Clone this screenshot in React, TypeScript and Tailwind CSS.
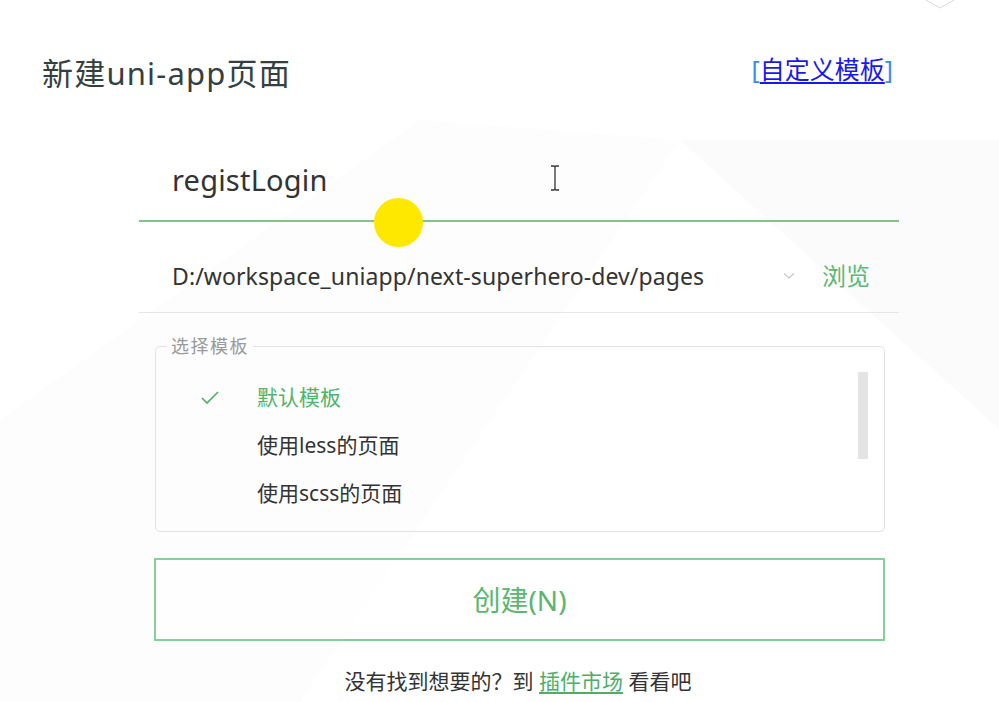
import React from "react";

const FONT = '"Noto Sans", "Noto Sans CJK SC", sans-serif';

export default function App() {
  return (
    <div
      className="relative w-[999px] h-[702px] overflow-hidden bg-white"
      style={{ fontFamily: FONT }}
    >
      {/* faint watermark */}
      <svg
        className="absolute inset-0 pointer-events-none"
        width="999"
        height="702"
        viewBox="0 0 999 702"
      >
        <polygon points="680,140 1000,430 1000,140" fill="#fbfbfc" />
        <polygon points="0,420 420,120 680,140 300,702 0,702" fill="#fdfdfd" />
        <polyline points="926,0 940,8 954,0" fill="none" stroke="#d8d8d8" strokeWidth="1" />
      </svg>

      <div className="relative flex flex-col">
        {/* header */}
        <div className="flex items-center justify-between pl-[42px] pr-[106px] pt-[53px]">
          <div className="text-[31px] leading-[40px] tracking-[1.2px] text-[#34403f]">新建uni-app页面</div>
          <div className="text-[25px] leading-[34px] mt-[-8px] ml-[-4px]">
            <span className="text-[#3b8ee8]">[</span>
            <span className="text-[#1a1ae6] underline underline-offset-[3px]">自定义模板</span>
            <span className="text-[#3b8ee8]">]</span>
          </div>
        </div>

        {/* form */}
        <div className="ml-[139px] w-[760px] mt-[44px] flex flex-col">
          <div className="relative h-[85px] border-b-2 border-[#7ec48d] flex items-center pl-[33px]">
            <span className="text-[29px] text-[#333] mt-[2px] tracking-[0.2px]">registLogin</span>
            <svg
              className="absolute left-[411px] top-[28px]"
              width="10"
              height="26"
              viewBox="0 0 10 26"
            >
              <path d="M1 1 H4 Q5 1 5 3 V23 Q5 25 4 25 H1 M9 1 H6 Q5 1 5 3 M5 23 Q5 25 6 25 H9" fill="none" stroke="#333" strokeWidth="1.3" />
            </svg>
          </div>

          <div className="h-[91px] border-b border-[#e6e6e6] flex items-center pl-[33px] pr-[29px] pt-[18px]">
            <span className="text-[23px] text-[#333] flex-1 tracking-[0.1px]">D:/workspace_uniapp/next-superhero-dev/pages</span>
            <svg width="12" height="8" viewBox="0 0 12 8" className="mr-[27px]">
              <polyline points="1,1.5 6,6 11,1.5" fill="none" stroke="#c8c8c8" strokeWidth="1.2" />
            </svg>
            <span className="text-[24px] text-[#5cb874]">浏览</span>
          </div>

          <fieldset className="ml-[16px] w-[730px] h-[196px] mt-[23px] border border-[#e2e2e2] rounded-[5px] relative">
            <legend className="ml-[11px] px-[4px] text-[18px] leading-[20px] tracking-[1.5px] text-[#9a9a9a]">选择模板</legend>
            <div className="flex flex-col pt-[17px] pl-[44px]">
              <div className="h-[49px] flex items-center">
                <svg width="20" height="16" viewBox="0 0 20 16" className="mr-[37px]">
                  <polyline points="2,8 7,13 18,2" fill="none" stroke="#4fae6b" strokeWidth="1.6" />
                </svg>
                <span className="text-[21px] text-[#4fb46a]">默认模板</span>
              </div>
              <div className="h-[48px] flex items-center pl-[57px]">
                <span className="text-[21px] text-[#333]">使用less的页面</span>
              </div>
              <div className="h-[48px] flex items-center pl-[57px]">
                <span className="text-[21px] text-[#333]">使用scss的页面</span>
              </div>
            </div>
            <div className="absolute right-[16px] top-[16px] w-[10px] h-[87px] bg-[#e4e4e4]" />
          </fieldset>

          <button className="ml-[15px] w-[731px] h-[83px] mt-[26px] border-2 border-[#86cf99] flex items-center justify-center bg-white/60">
            <span className="text-[28px] text-[#5ab670]">创建(N)</span>
          </button>

          <div className="mt-[25px] text-center text-[21px] text-[#333] ml-[-2px]">
            没有找到想要的？到 <span className="text-[#4cae68] underline underline-offset-[3px]">插件市场</span> 看看吧
          </div>
        </div>
      </div>

      {/* cursor highlight */}
      <div className="absolute left-[374px] top-[198px] w-[49px] h-[49px] rounded-full bg-[#ffe800]" />
    </div>
  );
}
